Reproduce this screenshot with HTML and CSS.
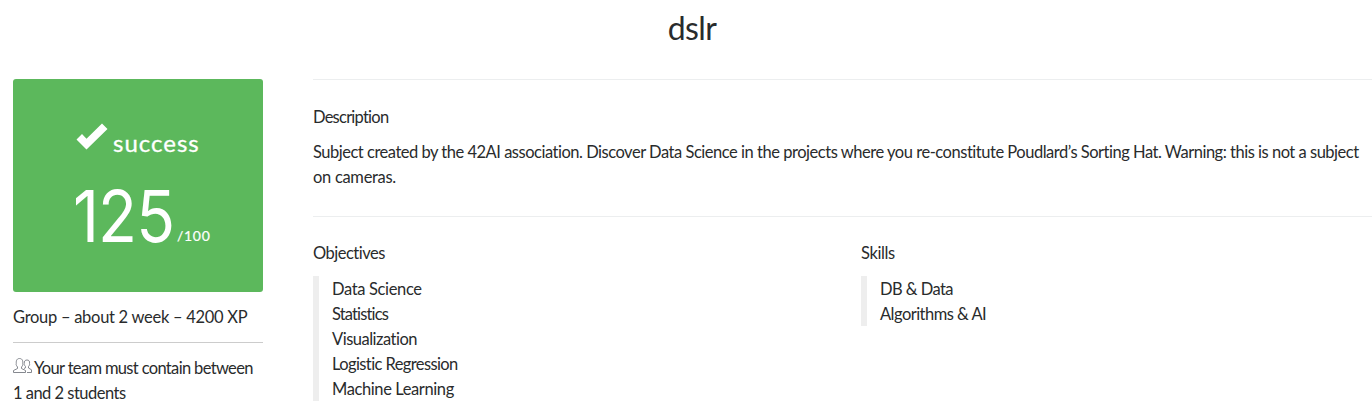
FILE: index.html
```html
<!DOCTYPE html>
<html lang="en">
<head>
<meta charset="utf-8">
<title>dslr</title>
<link rel="stylesheet" href="styles.css">
</head>
<body>
<h1 class="title">dslr</h1>
<div class="project">
  <aside class="sidebar">
    <div class="grade">
      <div class="status">
        <svg class="check" viewBox="0 0 32 27"><path d="M0.500 16.500 6 11l4.500 4.700L26 0.500 31.500 6 10.500 26.500Z"/></svg>
        <span class="status-text">success</span>
      </div>
      <div class="score"><span class="mark">125</span><span class="max">/100</span></div>
    </div>
    <p class="meta"><span class="t-group">Group – about 2 week – 4200 XP</span></p>
    <p class="team"><svg class="people" viewBox="0 0 19 16"><path d="M.5 14.500V12.500L4.500 10.500V9C2.800 7 3 5.800 3.300 5.500C2.900 1.800 4.500.500 6.500.500S10.200 1.800 9.700 5.500C10.200 6.500 9.500 8 8.500 9V10.500L12.500 12.500V14.500ZM11 10.500 12.500 9.800V8.500C11 6.800 11 6 11.300 5.300C11 3.200 12.200 2 14 2S17 3.200 16.500 5.500C17 6.500 16.300 7.600 15.500 8.500V10L18.500 11.800V14.500H14"/></svg><span class="t-team">Your team must contain between</span><br><span class="t-count">1 and 2 students</span></p>
  </aside>
  <main class="content">
    <section class="block description">
      <h2 class="heading"><span class="t-desc">Description</span></h2>
      <p class="text"><span class="t-line">Subject created by the 42AI association. <span class="t-mid">Discover Data Science in the projects where you re-constitute</span> Poudlard’s Sorting Hat. Warning: this is not a subject</span><br><span class="t-cam">on cameras.</span></p>
    </section>
    <section class="block columns">
      <div>
        <h2 class="heading"><span class="t-obj">Objectives</span></h2>
        <ul class="list">
          <li><span class="t-ds">Data Science</span></li>
          <li><span class="t-stat">Statistics</span></li>
          <li><span class="t-vis">Visualization</span></li>
          <li><span class="t-log">Logistic Regression</span></li>
          <li><span class="t-ml">Machine Learning</span></li>
        </ul>
      </div>
      <div>
        <h2 class="heading"><span class="t-skills">Skills</span></h2>
        <ul class="list">
          <li><span class="t-db">DB &amp; Data</span></li>
          <li><span class="t-algo">Algorithms &amp; AI</span></li>
        </ul>
      </div>
    </section>
  </main>
</div>
</body>
</html>
```
FILE: styles.css
```css
* { box-sizing: border-box; }
body {
  margin: 0;
  height: 413px;
  overflow: hidden;
  background: #fff;
  color: #292b2c;
  font: 16.5px/25px Lato, "Liberation Sans", sans-serif;
  font-variant-ligatures: none;
}
h1, h2, p, ul { margin: 0; padding: 0; font-weight: 400; }
.title { height: 79px; padding: 8px 0 0 12px; text-align: center; font-size: 32px; line-height: 40px; letter-spacing: -.6px; }
.project { display: grid; grid-template-columns: 250px 1fr; column-gap: 50px; padding-left: 13px; white-space: nowrap; }
.grade { height: 213px; padding: 44px 0 0 63px; border-radius: 3px; background: #5cb85c; color: #fff; }
.status { display: flex; height: 36px; }
.check { width: 32px; height: 27px; fill: #fff; }
.status-text { margin-left: 5px; font-size: 24px; line-height: 40px; letter-spacing: 1px; -webkit-text-stroke: .3px #fff; }
.score { display: flex; height: 90px; line-height: 114px; }
.mark { width: 101px; margin-left: -3px; font-family: Inter, sans-serif; font-size: 71px; letter-spacing: -1px; transform: scaleX(.9); transform-origin: left; }
.max { margin: 20px 0 0 3px; font-size: 14px; line-height: 114px; letter-spacing: .7px; -webkit-text-stroke: .2px #fff; }
.meta { height: 51px; padding-top: 13px; border-bottom: 1px solid #ccc; }
.team { padding-top: 13px; }
.people { width: 19px; height: 16px; margin-right: 2px; fill: none; stroke: #777b82; stroke-width: .9; vertical-align: 0; }
.block { border-top: 1px solid #eceeef; }
.description { height: 137px; padding-top: 25px; }
.heading { font-size: inherit; line-height: 25px; }
.text { padding-top: 10px; }
.columns { display: grid; grid-template-columns: 548px 1fr; padding-top: 24px; }
.list { margin-top: 10px; padding-left: 13px; border-left: 6px solid #eee; list-style: none; }
.list li { height: 25px; line-height: 27px; }
.t-group { letter-spacing: -.28px; }
.t-team { letter-spacing: -.66px; }
.t-count { letter-spacing: -.52px; }
.t-desc { letter-spacing: -.76px; }
.t-line { letter-spacing: -.49px; }
.t-mid { letter-spacing: -.47px; }
.t-cam { letter-spacing: -.3px; }
.t-obj { letter-spacing: -.5px; }
.t-ds { letter-spacing: -.35px; }
.t-stat { letter-spacing: -.85px; }
.t-vis { letter-spacing: -.5px; }
.t-log { letter-spacing: -.6px; }
.t-ml { letter-spacing: -.4px; }
.t-skills { letter-spacing: -.4px; }
.t-db { letter-spacing: -.55px; }
.t-algo { letter-spacing: -.53px; }
```
